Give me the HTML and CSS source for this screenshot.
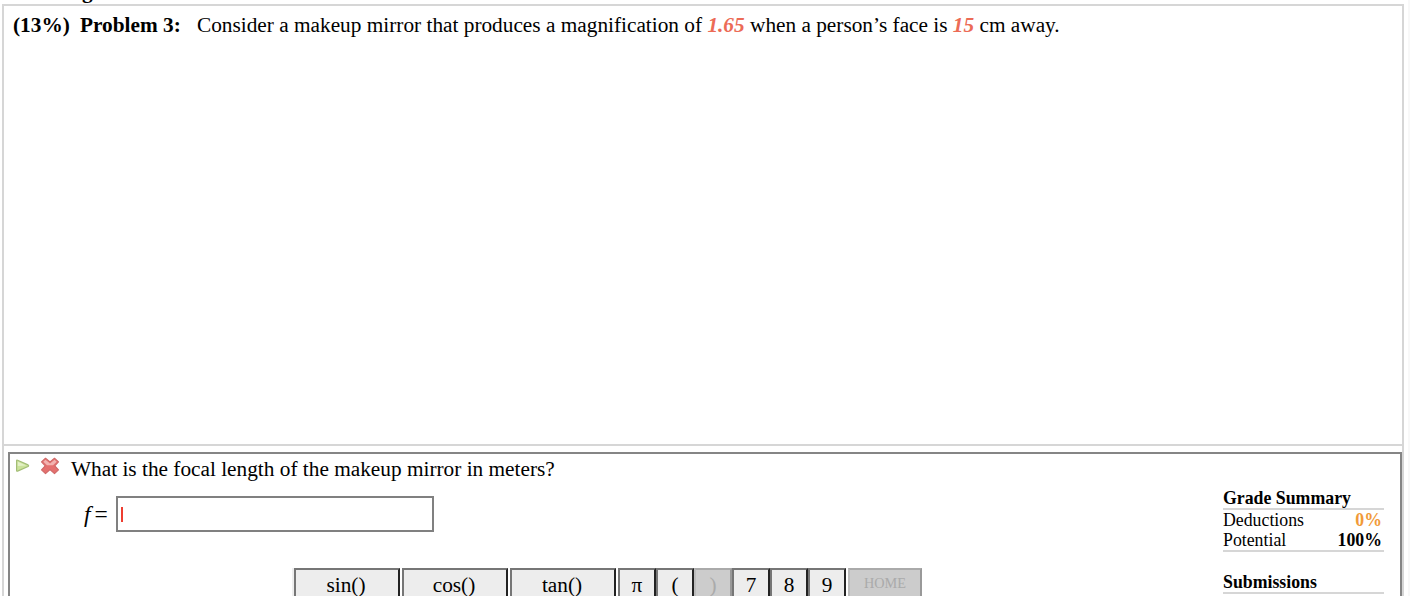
FILE: index.html
```
<!DOCTYPE html>
<html lang="en">
  <head>
    <meta charset="UTF-8" />
    <meta name="viewport" content="width=device-width, initial-scale=1.0" />
    <title>Problem 3</title>
    <link rel="stylesheet" href="styles.css">
  </head>
  <body>
    <div class="page">
      <div class="previous">g</div>
      <div class="problem">
        <div class="statement">
          <b class="weight">(13%)</b>
          <b class="number">Problem 3:</b>
          <span class="text">Consider a makeup mirror that produces a magnification of <em>1.65</em> when a person’s face is <em>15</em> cm away.</span>
        </div>
        <div class="part">
          <div class="work">
            <div class="question">
              <svg class="play" width="16" height="16" viewBox="0 0 16 16">
                <path d="M2.6 2.6 Q2.6 1.8 3.6 2.2 L14 6.9 Q15.2 7.6 14 8.5 L3.6 13.1 Q2.6 13.5 2.6 12.6 Z" fill="#cbe39b" stroke="#a3bd76" stroke-width="1.2" />
                <path d="M3.8 3.8 L12.3 7.5 L3.8 7.9 Z" fill="#e3f0c6" />
              </svg>
              <svg class="cross" width="20" height="18" viewBox="0 0 20 18">
                <path d="M5.5 1.2 L10 5 L14.5 1.2 L18.5 4.8 L14.8 8.8 L18.5 12.8 L14.5 16.7 L10 12.7 L5.5 16.7 L1.5 12.8 L5.2 8.8 L1.5 4.8 Z" fill="#e4706f" stroke="#cf6968" stroke-width="1.1" stroke-linejoin="round" />
                <path d="M3.3 4.8 L5.5 2.8 L10 6.6 L14.5 2.8 L16.7 4.8 L13 8.3 L7 8.3 Z" fill="#f2b3b0" />
              </svg>
              <span>What is the focal length of the makeup mirror in meters?</span>
            </div>
            <div class="answer">
              <span class="symbol"><i>f</i> =</span>
              <div class="field"><span class="caret"></span></div>
            </div>
            <div class="keypad">
              <div class="functions">
                <button>sin()</button>
                <button>cos()</button>
                <button>tan()</button>
              </div>
              <div class="keys">
                <button>π</button>
                <button>(</button>
                <button disabled>)</button>
                <button>7</button>
                <button>8</button>
                <button>9</button>
              </div>
              <button class="home" disabled>HOME</button>
            </div>
          </div>
          <div class="summary">
            <h4>Grade Summary</h4>
            <div class="grades">
              <div class="row"><span>Deductions</span><b class="deduction">0%</b></div>
              <div class="row"><span>Potential</span><b>100%</b></div>
            </div>
            <h4>Submissions</h4>
          </div>
        </div>
      </div>
    </div>
  </body>
</html>
```

FILE: styles.css
```
* {
  box-sizing: border-box;
}
body {
  margin: 0;
  height: 596px;
  overflow: hidden;
  background-color: #f8f8f8;
  font-family: "Liberation Serif", "Times New Roman", serif;
  font-size: 21.3px;
  line-height: 24px;
  color: #000;
}
.page {
  width: 1408px;
  height: 596px;
  padding-left: 2px;
  overflow: hidden;
  background-color: #fff;
}
.previous {
  display: flex;
  align-items: flex-end;
  height: 4px;
  padding: 0 0 1px 80px;
  font-weight: bold;
}
.problem {
  width: 1402px;
  height: 640px;
  border: 2px solid #d6d6d6;
}
.statement {
  display: flex;
  height: 440px;
  padding: 7px 0 0 9px;
  border-bottom: 2px solid #d6d6d6;
  white-space: nowrap;
}
.weight {
  width: 67px;
}
.number {
  width: 117px;
}
.statement em {
  color: #ec6b56;
  font-weight: bold;
}
.part {
  display: flex;
  justify-content: space-between;
  height: 180px;
  margin: 6px 0 0 4px;
  border: 2px solid #858585;
}
.question {
  display: flex;
  height: 42px;
  padding: 3px 0 0 4px;
  white-space: nowrap;
}
.play {
  margin: 1px 10px 0 0;
}
.cross {
  margin-right: 11px;
}
.answer {
  display: flex;
  height: 36px;
  padding-left: 74px;
}
.symbol {
  width: 32px;
  padding-top: 6px;
  font-size: 23.5px;
  word-spacing: -2px;
}
.field {
  width: 318px;
  padding: 9px 0 0 3px;
  border: 2px solid #808080;
}
.caret {
  display: block;
  width: 2px;
  height: 15px;
  background-color: #ee3d30;
}
.keypad {
  display: flex;
  gap: 2px;
  margin: 36px 0 0 282px;
  border-left: 2px solid #eee;
}
.functions {
  display: flex;
  gap: 2px;
}
.keys {
  display: flex;
}
button {
  width: 38px;
  height: 36px;
  padding: 0 0 2px;
  border: 2px solid #222;
  border-top-color: #767676;
  border-left-color: #767676;
  background-color: #ededed;
  font: inherit;
  color: #000;
}
.functions button {
  width: 106px;
  padding-right: 2px;
}
button:disabled {
  border-color: #999;
  border-top-color: #aaa;
  border-left-color: #bbb;
  background-color: #ccc;
  color: #aaa;
}
.keypad .home {
  width: 74px;
  height: 32px;
  padding: 0 0 2px;
  font-size: 14.3px;
}
.summary {
  width: 161px;
  margin: 34px 16px 0 0;
  font-size: 17.8px;
  line-height: 20px;
}
h4 {
  margin: 0;
  height: 22px;
  border-bottom: 2px solid #d6d6d6;
  font-size: 17.8px;
}
.grades {
  height: 42px;
  margin-bottom: 20px;
  border-bottom: 2px solid #d6d6d6;
}
.row {
  display: flex;
  justify-content: space-between;
  padding-right: 2px;
}
.deduction {
  color: #f19a38;
}
```
